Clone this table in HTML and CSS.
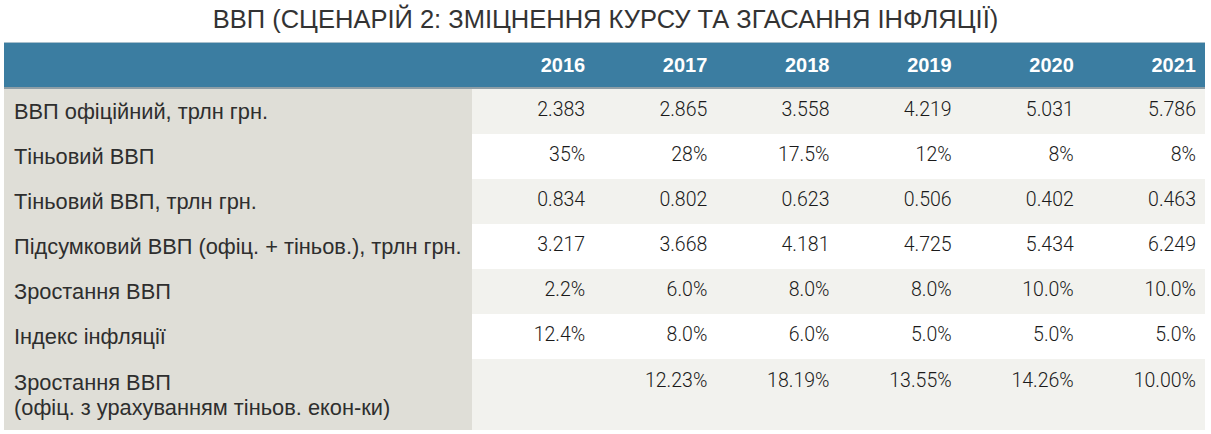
FILE: index.html
```html
<!DOCTYPE html>
<html lang="uk">
<head>
<meta charset="utf-8">
<title>ВВП (сценарій 2)</title>
<link rel="stylesheet" href="styles.css">
</head>
<body>
<h1 class="title">ВВП (СЦЕНАРІЙ 2: ЗМІЦНЕННЯ КУРСУ ТА ЗГАСАННЯ ІНФЛЯЦІЇ)</h1>
<table class="gdp">
  <colgroup>
    <col class="col-label">
    <col class="col-year"><col class="col-year"><col class="col-year">
    <col class="col-year"><col class="col-year"><col class="col-year">
  </colgroup>
  <thead>
    <tr>
      <th class="corner"></th>
      <th>2016</th><th>2017</th><th>2018</th><th>2019</th><th>2020</th><th>2021</th>
    </tr>
  </thead>
  <tbody>
    <tr class="odd">
      <th>ВВП офіційний, трлн грн.</th>
      <td>2.383</td><td>2.865</td><td>3.558</td><td>4.219</td><td>5.031</td><td>5.786</td>
    </tr>
    <tr>
      <th>Тіньовий ВВП</th>
      <td>35%</td><td>28%</td><td>17.5%</td><td>12%</td><td>8%</td><td>8%</td>
    </tr>
    <tr class="odd">
      <th>Тіньовий ВВП, трлн грн.</th>
      <td>0.834</td><td>0.802</td><td>0.623</td><td>0.506</td><td>0.402</td><td>0.463</td>
    </tr>
    <tr>
      <th>Підсумковий ВВП (офіц. + тіньов.), трлн грн.</th>
      <td>3.217</td><td>3.668</td><td>4.181</td><td>4.725</td><td>5.434</td><td>6.249</td>
    </tr>
    <tr class="odd">
      <th>Зростання ВВП</th>
      <td>2.2%</td><td>6.0%</td><td>8.0%</td><td>8.0%</td><td>10.0%</td><td>10.0%</td>
    </tr>
    <tr>
      <th>Індекс інфляції</th>
      <td>12.4%</td><td>8.0%</td><td>6.0%</td><td>5.0%</td><td>5.0%</td><td>5.0%</td>
    </tr>
    <tr class="odd tall">
      <th>Зростання ВВП<br>(офіц. з урахуванням тіньов. екон-ки)</th>
      <td></td><td>12.23%</td><td>18.19%</td><td>13.55%</td><td>14.26%</td><td>10.00%</td>
    </tr>
  </tbody>
</table>
</body>
</html>
```

FILE: styles.css
```css
html, body {
  margin: 0;
  padding: 0;
  background: #ffffff;
}

body {
  font-family: "Liberation Sans", Arial, sans-serif;
  color: #2b2b2b;
}

.title {
  margin: 0;
  height: 38px;
  padding-bottom: 4px;
  line-height: 38px;
  text-align: center;
  font-size: 25.5px;
  font-weight: normal;
  color: #333333;
}

.gdp {
  margin-left: 4px;
  width: 1201px;
  border-collapse: collapse;
  table-layout: fixed;
  font-size: 19.5px;
}

.col-label {
  width: 468px;
}

.gdp thead tr {
  background: #3b7da1;
  border-top: 1px solid #a8c0cd;
  border-bottom: 2px solid #8e9ea6;
}

.gdp thead th {
  height: 44px;
  padding: 0 9px 0 0;
  text-align: right;
  color: #ffffff;
  font-weight: bold;
  font-size: 20px;
  vertical-align: middle;
}

.gdp tbody th {
  background: #dfded7;
  text-align: left;
  font-weight: normal;
  font-size: 21.8px;
  padding: 0 0 0 10px;
  height: 45px;
  color: #2e2e2e;
  vertical-align: middle;
  white-space: nowrap;
}

.gdp tbody td {
  height: 41px;
  padding: 0 9px 4px 0;
  text-align: right;
  vertical-align: middle;
  font-family: Roboto, "Liberation Sans", Arial, sans-serif;
  font-weight: 300;
  color: #1a1a1a;
  background: #ffffff;
}

.gdp tbody tr.odd td {
  background: #f2f2ee;
}

.gdp tbody tr.tall th,
.gdp tbody tr.tall td {
  vertical-align: top;
  line-height: 25px;
  padding-bottom: 0;
}

.gdp tbody tr.tall th {
  height: 60px;
  padding-top: 11px;
}

.gdp tbody tr.tall td {
  height: 62px;
  padding-top: 9px;
}
```
